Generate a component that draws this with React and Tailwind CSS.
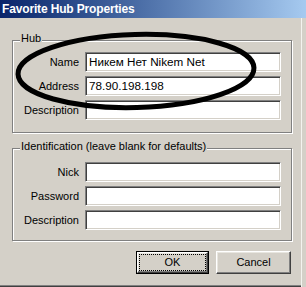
import React from "react";

function Group({ label, className = "", children }) {
  return (
    <div
      className={`relative ml-[12px] w-[280px] h-[93px] border border-[#808080] shadow-[inset_1px_1px_0_#ffffff,1px_1px_0_#ffffff] ${className}`}
    >
      <span className="absolute left-[7px] top-[-9px] px-[1px] bg-[#d4d0c8] leading-[13px] whitespace-nowrap">
        {label}
      </span>
      {children}
    </div>
  );
}

function Row({ label, value }) {
  return (
    <div className="flex items-center h-[20px]">
      <div className="w-[66px] text-right leading-[13px]">{label}</div>
      <div className="ml-[6px] w-[196px] h-[20px] bg-white border border-[#808080] border-r-white border-b-white shadow-[inset_1px_1px_0_#404040,inset_-1px_-1px_0_#d4d0c8] flex items-center pl-[3px] text-[11.7px] leading-[14px] whitespace-nowrap overflow-hidden">
        {value}
      </div>
    </div>
  );
}

export default function App() {
  return (
    <div className="relative w-[306px] h-[287px] bg-[#d4d0c8] overflow-hidden font-['Liberation_Sans',Arial,sans-serif] text-[11px] text-black shadow-[inset_-4px_0_0_#d4d0c8,inset_-5px_0_0_#f4f3ef,inset_0_-1px_0_#404040,inset_0_-2px_0_#808080]">
      <div className="h-[18px] bg-linear-to-r from-[#0a246a] to-[#a6caf0] flex items-center pl-[2px] text-white font-bold text-[12px] tracking-[-0.15px] leading-[14px] whitespace-nowrap">
        Favorite Hub Properties
      </div>

      <Group label="Hub" className="mt-[22px]">
        <div className="flex flex-col gap-[4px] pt-[11px]">
          <Row label="Name" value="Никем Нет Nikem Net" />
          <Row label="Address" value="78.90.198.198" />
          <Row label="Description" value="" />
        </div>
      </Group>

      <Group label="Identification (leave blank for defaults)" className="mt-[15px]">
        <div className="flex flex-col gap-[4px] pt-[13px]">
          <Row label="Nick" value="" />
          <Row label="Password" value="" />
          <Row label="Description" value="" />
        </div>
      </Group>

      <div className="flex justify-end gap-[7px] mt-[10px] pr-[15px]">
        <div className="w-[73px] h-[23px] border border-black flex">
          <div className="flex-1 flex border border-white border-r-[#404040] border-b-[#404040] shadow-[inset_-1px_-1px_0_#808080,inset_1px_1px_0_#e8e6e0] p-[1px]">
            <div className="flex-1 border border-dotted border-black flex items-center justify-center leading-[13px]">
              OK
            </div>
          </div>
        </div>
        <div className="w-[75px] h-[23px] flex border border-white border-r-[#404040] border-b-[#404040] shadow-[inset_-1px_-1px_0_#808080,inset_1px_1px_0_#e8e6e0]">
          <div className="flex-1 flex items-center justify-center leading-[13px]">Cancel</div>
        </div>
      </div>

      <svg
        className="absolute left-0 top-0 pointer-events-none"
        width="306"
        height="287"
        viewBox="0 0 306 287"
      >
        <ellipse
          cx="136"
          cy="71"
          rx="118"
          ry="36.5"
          transform="rotate(-1.5 136 71)"
          fill="none"
          stroke="#000"
          strokeWidth="5"
        />
      </svg>
    </div>
  );
}
